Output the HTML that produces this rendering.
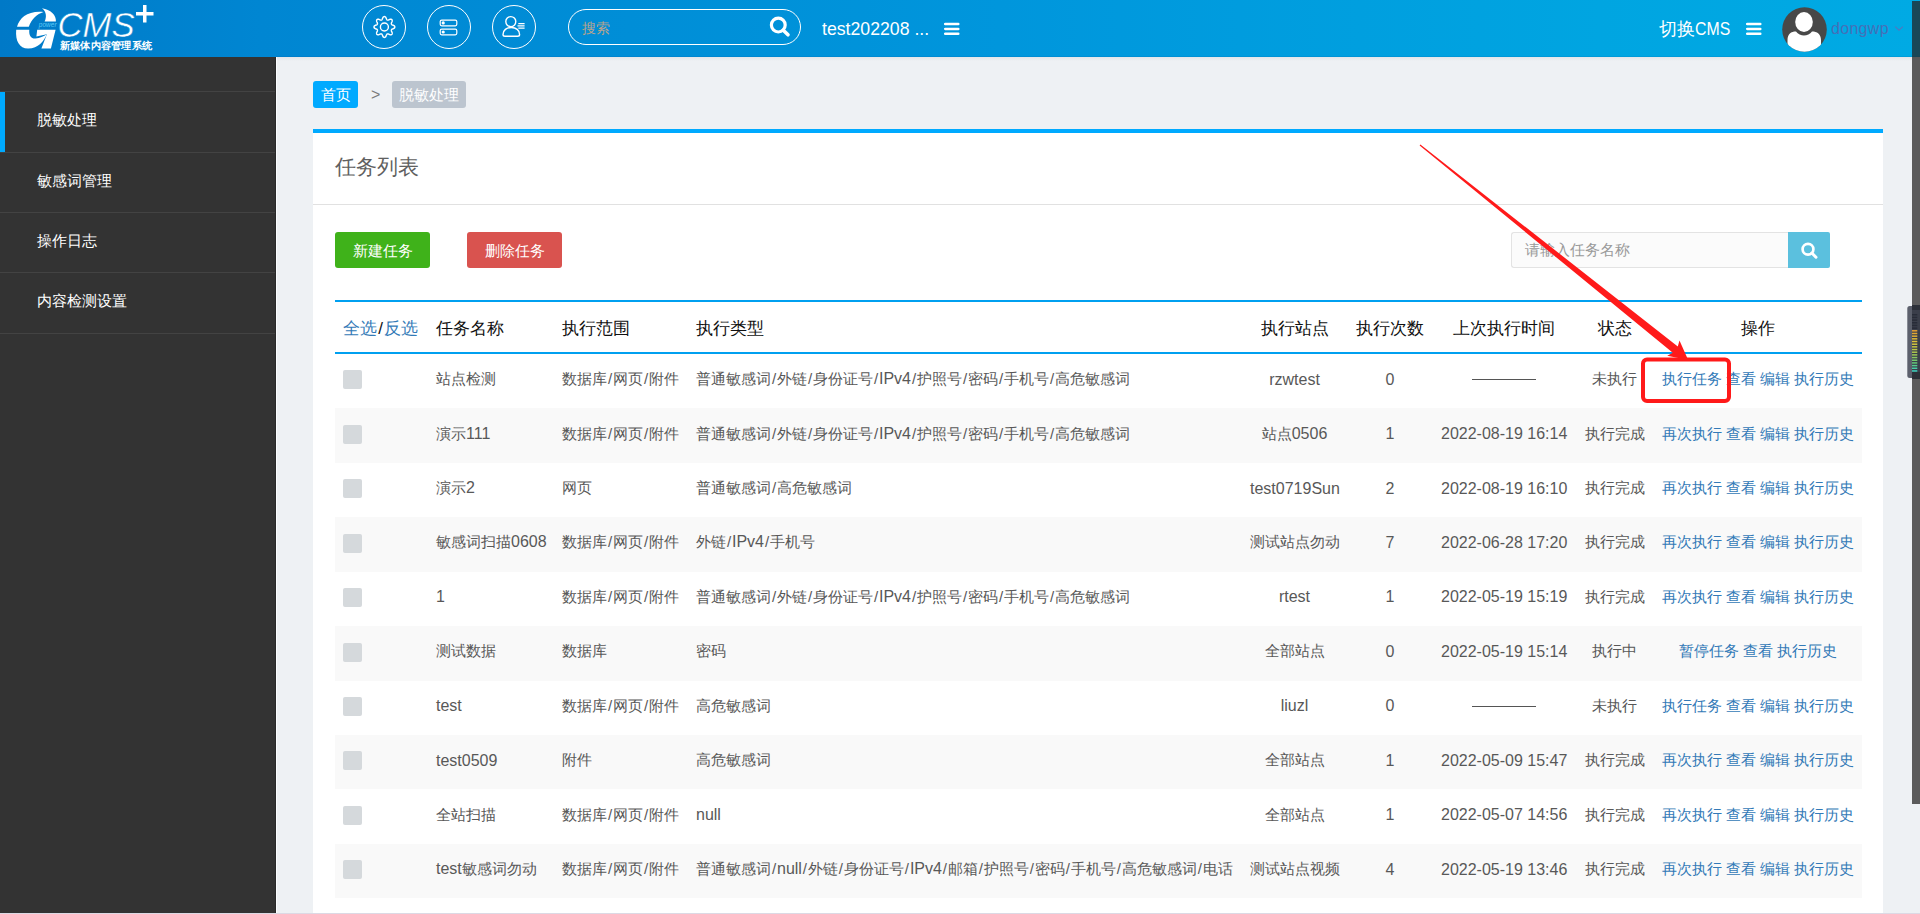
<!DOCTYPE html>
<html><head><meta charset="utf-8">
<style>
*{box-sizing:border-box;margin:0;padding:0}
html,body{width:1920px;height:914px;overflow:hidden;background:#eef1f4;font-family:"Liberation Sans",sans-serif;color:#555}
.abs{position:absolute}
#hdr{position:absolute;left:0;top:0;width:1920px;height:57px;background:linear-gradient(to right,rgb(0,121,199) 0px,rgb(0,134,210) 260px,rgb(0,150,220) 1000px,rgb(0,165,225) 1600px,rgb(0,170,228) 1920px)}
.circ{position:absolute;top:5px;width:44px;height:44px;border:1.5px solid #fff;border-radius:50%}
.circ svg{position:absolute;left:0;top:0}
#srch{position:absolute;left:568px;top:9px;width:233px;height:36px;border:1px solid #fff;border-radius:18px}
#srch span{position:absolute;left:13px;top:9px;font-size:14px;line-height:18px;color:#b8a48e}
.htxt{position:absolute;color:#fff;font-size:18px;line-height:22px;white-space:nowrap}
.ham{position:absolute;width:15px;height:12px}
.ham i{position:absolute;left:0;width:15px;height:2.5px;background:#fff}
#side{position:absolute;left:0;top:57px;width:276px;height:857px;background:#333}
.sep{position:absolute;left:0;width:276px;height:1px;background:#434343}
.mi{position:absolute;left:37px;font-size:15px;color:#fff;line-height:20px}
#bc1{position:absolute;left:313px;top:81px;width:45px;height:27px;background:#00aaff;border-radius:3px;color:#fff;font-size:15px;line-height:27px;padding-left:8px}
#bcgt{position:absolute;left:371px;top:86px;font-size:16px;line-height:18px;color:#7a7a7a}
#bc2{position:absolute;left:392px;top:81px;width:74px;height:27px;background:#bcc5cf;border-radius:3px;color:#fff;font-size:15px;line-height:27px;padding-left:7px}
#panel{position:absolute;left:313px;top:129px;width:1570px;height:800px;background:#fff;border-top:4px solid #00aaff}
#ptitle{position:absolute;left:22px;top:21px;font-size:21px;line-height:26px;color:#606060}
#psep{position:absolute;left:0;top:71px;width:1570px;height:1px;background:#e1e1e1}
.btn{position:absolute;top:99px;width:95px;height:36px;border-radius:3px;color:#fff;font-size:15px;line-height:38px;text-align:center}
#tsearch{position:absolute;left:1198px;top:99px;width:277px;height:36px;background:#fbfbfb;border:1px solid #e3e3e3;border-right:0;border-radius:3px 0 0 3px}
#tsearch span{position:absolute;left:13px;top:8px;font-size:15px;line-height:18px;color:#999}
#tsbtn{position:absolute;left:1475px;top:99px;width:42px;height:36px;background:#5bc0de;border-radius:0 2px 2px 0}
table{position:absolute;left:22px;top:167px;width:1527px;border-collapse:separate;border-spacing:0;table-layout:fixed}
th{height:54px;font-size:17px;font-weight:normal;color:#111;text-align:left;padding:2px 8px 0;border-top:2px solid #00a0f0;border-bottom:2px solid #00a0f0;white-space:nowrap}
td{height:54.43px;font-size:15px;color:#585858;padding:0 8px 3px;white-space:nowrap;border-top:0}
tr:nth-child(even) td{background:#f9f9f9}
th.c,td.c{text-align:center}
.cb{display:inline-block;width:19px;height:19px;background:#d5d9dc;border-radius:2px;vertical-align:middle}
.dash{display:inline-block;width:64px;height:1px;background:#555;vertical-align:middle;position:relative;top:-1.5px}
.ops a{color:#337ab7}
td.ops{padding-left:7px;padding-right:7px}
.l{font-size:16px}
.sl{display:inline-block;width:6px;text-align:center}
a.bl{color:#337ab7}
</style></head><body>
<div id="hdr">
  <!-- logo -->
  <svg class="abs" style="left:0;top:0" width="170" height="57" viewBox="0 0 170 57">
    <g fill="#fff">
    <path d="M17,26.8 C19.5,17.5 28,10.5 43.5,11.9 C37,14 31.5,19 28.8,26.8 Z"/>
    <path d="M41.9,8.2 C50.5,9.5 56.5,15 55.9,21.6 L44.6,21.6 C46.8,17 46.5,11.5 41.9,8.2 Z"/>
    <path d="M16.2,29.7 L29.3,29.7 C28.8,35.5 31,38.8 35.5,38.6 C40,38.3 43.5,36 46.9,34.2 C44,41 38,48.8 28,48.6 C19.5,48.4 15.2,41 16.2,29.7 Z"/>
    <path d="M37.2,29.7 L55.6,29.7 L50.9,48.6 L41.4,48.6 L46.9,34.2 L36.4,36.4 Z"/>
    </g>
    <text x="38.8" y="27.2" font-size="7" font-style="italic" fill="#5ccaf6" textLength="17.8" lengthAdjust="spacingAndGlyphs">power</text>
    <text x="57.5" y="37.3" font-family="Liberation Sans" font-style="italic" font-size="35.5" fill="#fff" stroke="#0083cc" stroke-width="0.5" textLength="77" lengthAdjust="spacingAndGlyphs">CMS</text>
    <path d="M143 5 h3.5 v7 h7 v3.5 h-7 v7 h-3.5 v-7 h-7 v-3.5 h7 z" fill="#fff"/>
    <text x="60" y="49" font-size="10" font-weight="bold" fill="#fff" textLength="92" lengthAdjust="spacingAndGlyphs">新媒体内容管理系统</text>
  </svg>
  <div class="circ" style="left:362px">
    <svg width="41" height="41" viewBox="0 0 41 41"><g transform="translate(21.4,21)" fill="none" stroke="#fff" stroke-width="1.4">
      <path d="M0.00 -10.45 L0.41 -10.39 L0.80 -10.21 L1.17 -9.90 L1.50 -9.48 L1.76 -8.83 L1.96 -8.17 L2.18 -7.73 L2.40 -7.38 L2.63 -7.13 L2.89 -6.98 L3.18 -6.91 L3.52 -6.92 L3.92 -7.00 L4.39 -7.16 L5.00 -7.48 L5.64 -7.77 L6.17 -7.83 L6.65 -7.78 L7.06 -7.63 L7.39 -7.39 L7.63 -7.06 L7.78 -6.65 L7.83 -6.17 L7.77 -5.64 L7.48 -5.00 L7.16 -4.39 L7.00 -3.92 L6.92 -3.52 L6.91 -3.18 L6.98 -2.89 L7.13 -2.63 L7.38 -2.40 L7.73 -2.18 L8.17 -1.96 L8.83 -1.76 L9.48 -1.50 L9.90 -1.17 L10.21 -0.80 L10.39 -0.41 L10.45 -0.00 L10.39 0.41 L10.21 0.80 L9.90 1.17 L9.48 1.50 L8.83 1.76 L8.17 1.96 L7.73 2.18 L7.38 2.40 L7.13 2.63 L6.98 2.89 L6.91 3.18 L6.92 3.52 L7.00 3.92 L7.16 4.39 L7.48 5.00 L7.77 5.64 L7.83 6.17 L7.78 6.65 L7.63 7.06 L7.39 7.39 L7.06 7.63 L6.65 7.78 L6.17 7.83 L5.64 7.77 L5.00 7.48 L4.39 7.16 L3.92 7.00 L3.52 6.92 L3.18 6.91 L2.89 6.98 L2.63 7.13 L2.40 7.38 L2.18 7.73 L1.96 8.17 L1.76 8.83 L1.50 9.48 L1.17 9.90 L0.80 10.21 L0.41 10.39 L0.00 10.45 L-0.41 10.39 L-0.80 10.21 L-1.17 9.90 L-1.50 9.48 L-1.76 8.83 L-1.96 8.17 L-2.18 7.73 L-2.40 7.38 L-2.63 7.13 L-2.89 6.98 L-3.18 6.91 L-3.52 6.92 L-3.92 7.00 L-4.39 7.16 L-5.00 7.48 L-5.64 7.77 L-6.17 7.83 L-6.65 7.78 L-7.06 7.63 L-7.39 7.39 L-7.63 7.06 L-7.78 6.65 L-7.83 6.17 L-7.77 5.64 L-7.48 5.00 L-7.16 4.39 L-7.00 3.92 L-6.92 3.52 L-6.91 3.18 L-6.98 2.89 L-7.13 2.63 L-7.38 2.40 L-7.73 2.18 L-8.17 1.96 L-8.83 1.76 L-9.48 1.50 L-9.90 1.17 L-10.21 0.80 L-10.39 0.41 L-10.45 0.00 L-10.39 -0.41 L-10.21 -0.80 L-9.90 -1.17 L-9.48 -1.50 L-8.83 -1.76 L-8.17 -1.96 L-7.73 -2.18 L-7.38 -2.40 L-7.13 -2.63 L-6.98 -2.89 L-6.91 -3.18 L-6.92 -3.52 L-7.00 -3.92 L-7.16 -4.39 L-7.48 -5.00 L-7.77 -5.64 L-7.83 -6.17 L-7.78 -6.65 L-7.63 -7.06 L-7.39 -7.39 L-7.06 -7.63 L-6.65 -7.78 L-6.17 -7.83 L-5.64 -7.77 L-5.00 -7.48 L-4.39 -7.16 L-3.92 -7.00 L-3.52 -6.92 L-3.18 -6.91 L-2.89 -6.98 L-2.63 -7.13 L-2.40 -7.38 L-2.18 -7.73 L-1.96 -8.17 L-1.76 -8.83 L-1.50 -9.48 L-1.17 -9.90 L-0.80 -10.21 L-0.41 -10.39 Z"/>
      <circle r="4"/></g></svg>
  </div>
  <div class="circ" style="left:427px">
    <svg width="41" height="41" viewBox="0 0 41 41"><g fill="none" stroke="#fff" stroke-width="1.2">
      <rect x="12.2" y="14.1" width="16.6" height="5.7" rx="1.5"/><rect x="12.2" y="23.2" width="16.6" height="5.6" rx="1.5"/></g>
      <circle cx="15.2" cy="16.9" r="1.6" fill="#fff"/><circle cx="15.2" cy="26" r="1.6" fill="#fff"/></svg>
  </div>
  <div class="circ" style="left:492px">
    <svg width="41" height="41" viewBox="0 0 41 41"><g fill="none" stroke="#fff" stroke-width="1.4">
      <circle cx="17.8" cy="15.6" r="5"/><path d="M12 30.2 H24.6 Q26.6 30.2 26.6 28.4 C26.6 24.3 23 21.5 18.3 21.5 C13.6 21.5 10 24.3 10 28.4 Q10 30.2 12 30.2 Z"/>
      <path d="M25.3 17.7 H31.6 M24.5 19.9 H31.6 M25.3 22.1 H31.6" stroke-width="1.2"/></g></svg>
  </div>
  <div id="srch"><span>搜索</span>
    <svg class="abs" style="left:199px;top:5px" width="24" height="24" viewBox="0 0 24 24"><circle cx="10.3" cy="10.1" r="6.9" fill="none" stroke="#fff" stroke-width="3.2"/><path d="M15.3 15.2 L20 19.8" stroke="#fff" stroke-width="3.6" stroke-linecap="round"/></svg>
  </div>
  <div class="htxt" style="left:822px;top:18px;font-size:17.7px">test202208 ...</div>
  <svg class="abs" style="left:944px;top:22px" width="16" height="14" viewBox="0 0 16 14"><path d="M1.2 2 H14.3 M1.2 6.9 H14.3 M1.2 11.7 H14.3" stroke="#fff" stroke-width="2.5" stroke-linecap="round"/></svg>
  <div class="htxt" style="left:1659px;top:18px">切换<span style="display:inline-block;transform:scaleX(0.88);transform-origin:0 0">CMS</span></div>
  <svg class="abs" style="left:1746px;top:22px" width="16" height="14" viewBox="0 0 16 14"><path d="M1.2 2 H14.3 M1.2 6.9 H14.3 M1.2 11.7 H14.3" stroke="#fff" stroke-width="2.5" stroke-linecap="round"/></svg>
  <svg class="abs" style="left:1782px;top:7px" width="45" height="45" viewBox="0 0 45 45">
    <defs><clipPath id="avc"><circle cx="22.5" cy="22.5" r="22.3"/></clipPath></defs>
    <circle cx="22.5" cy="22.5" r="22.3" fill="#484848"/>
    <g clip-path="url(#avc)" fill="#fff">
      <ellipse cx="22" cy="15" rx="8.8" ry="10"/>
      <path d="M5.5 50 L5.5 33 C5.5 27 9 24.5 14 24.5 C16 27 19 28.5 22 28.5 C25 28.5 28 27 30 24.5 C35 24.5 39 27 39 33 L39 50 Z"/>
    </g>
  </svg>
  <div class="abs" style="left:1831px;top:19px;font-size:16px;line-height:20px;color:#4470b8;letter-spacing:0.3px">dongwp</div>
  <svg class="abs" style="left:1894px;top:25px" width="10" height="7" viewBox="0 0 10 7"><path d="M1.2 1.6 L5 5.2 L8.8 1.6" fill="none" stroke="#4f78c0" stroke-width="1.1"/></svg>
</div>

<div id="side">
  <div class="sep" style="top:34px"></div>
  <div class="abs" style="left:0;top:35px;width:5px;height:60px;background:#00aaff"></div>
  <div class="sep" style="top:95px"></div>
  <div class="sep" style="top:155px"></div>
  <div class="sep" style="top:215px"></div>
  <div class="sep" style="top:276px"></div>
  <div class="mi" style="top:53px">脱敏处理</div>
  <div class="mi" style="top:114px">敏感词管理</div>
  <div class="mi" style="top:174px">操作日志</div>
  <div class="mi" style="top:234px">内容检测设置</div>
</div>

<div class="abs" style="left:276px;top:56px;width:1644px;height:1px;background:rgba(0,60,140,0.10)"></div>
<div class="abs" style="left:275px;top:57px;width:1px;height:856px;background:#292929"></div>
<div class="abs" style="left:276px;top:57px;width:1px;height:856px;background:#fbfdff"></div>
<div class="abs" style="left:277px;top:57px;width:1643px;height:4px;background:linear-gradient(#e4e6e9,#eef1f4)"></div>
<div id="bc1">首页</div>
<div id="bcgt">&gt;</div>
<div id="bc2">脱敏处理</div>

<div id="panel">
  <div id="ptitle">任务列表</div>
  <div id="psep"></div>
  <div class="btn" style="left:22px;background:#3fb21a">新建任务</div>
  <div class="btn" style="left:154px;background:#d9534f">删除任务</div>
  <div id="tsearch"><span>请输入任务名称</span></div>
  <div id="tsbtn"><svg class="abs" style="left:12px;top:9px" width="20" height="20" viewBox="0 0 20 20"><circle cx="8" cy="8.2" r="5.4" fill="none" stroke="#fff" stroke-width="2.7"/><path d="M11.8 12 L16 16.2" stroke="#fff" stroke-width="3" stroke-linecap="round"/></svg></div>
  <table>
    <colgroup><col style="width:93px"><col style="width:126px"><col style="width:134px"><col style="width:554px"><col style="width:105px"><col style="width:86px"><col style="width:142px"><col style="width:79px"><col style="width:208px"></colgroup>
    <thead><tr><th><a class="bl">全选</a><span class="sl" style="width:7px">/</span><a class="bl">反选</a></th><th>任务名称</th><th>执行范围</th><th>执行类型</th><th class="c">执行站点</th><th class="c">执行次数</th><th class="c">上次执行时间</th><th class="c">状态</th><th class="c">操作</th></tr></thead>
    <tbody>
<tr><td><span class="cb"></span></td><td>站点检测</td><td>数据库<span class="sl">/</span>网页<span class="sl">/</span>附件</td><td>普通敏感词<span class="sl">/</span>外链<span class="sl">/</span>身份证号<span class="sl">/</span><span class="l">IPv4</span><span class="sl">/</span>护照号<span class="sl">/</span>密码<span class="sl">/</span>手机号<span class="sl">/</span>高危敏感词</td><td class="c"><span class="l">rzwtest</span></td><td class="c"><span class="l">0</span></td><td class="c"><span class="dash"></span></td><td class="c">未执行</td><td class="c ops"><a>执行任务</a> <a>查看</a> <a>编辑</a> <a>执行历史</a></td></tr>
<tr><td><span class="cb"></span></td><td>演示<span class="l">111</span></td><td>数据库<span class="sl">/</span>网页<span class="sl">/</span>附件</td><td>普通敏感词<span class="sl">/</span>外链<span class="sl">/</span>身份证号<span class="sl">/</span><span class="l">IPv4</span><span class="sl">/</span>护照号<span class="sl">/</span>密码<span class="sl">/</span>手机号<span class="sl">/</span>高危敏感词</td><td class="c">站点<span class="l">0506</span></td><td class="c"><span class="l">1</span></td><td class="c"><span class="l">2022-08-19 16:14</span></td><td class="c">执行完成</td><td class="c ops"><a>再次执行</a> <a>查看</a> <a>编辑</a> <a>执行历史</a></td></tr>
<tr><td><span class="cb"></span></td><td>演示<span class="l">2</span></td><td>网页</td><td>普通敏感词<span class="sl">/</span>高危敏感词</td><td class="c"><span class="l">test0719Sun</span></td><td class="c"><span class="l">2</span></td><td class="c"><span class="l">2022-08-19 16:10</span></td><td class="c">执行完成</td><td class="c ops"><a>再次执行</a> <a>查看</a> <a>编辑</a> <a>执行历史</a></td></tr>
<tr><td><span class="cb"></span></td><td>敏感词扫描<span class="l">0608</span></td><td>数据库<span class="sl">/</span>网页<span class="sl">/</span>附件</td><td>外链<span class="sl">/</span><span class="l">IPv4</span><span class="sl">/</span>手机号</td><td class="c">测试站点勿动</td><td class="c"><span class="l">7</span></td><td class="c"><span class="l">2022-06-28 17:20</span></td><td class="c">执行完成</td><td class="c ops"><a>再次执行</a> <a>查看</a> <a>编辑</a> <a>执行历史</a></td></tr>
<tr><td><span class="cb"></span></td><td><span class="l">1</span></td><td>数据库<span class="sl">/</span>网页<span class="sl">/</span>附件</td><td>普通敏感词<span class="sl">/</span>外链<span class="sl">/</span>身份证号<span class="sl">/</span><span class="l">IPv4</span><span class="sl">/</span>护照号<span class="sl">/</span>密码<span class="sl">/</span>手机号<span class="sl">/</span>高危敏感词</td><td class="c"><span class="l">rtest</span></td><td class="c"><span class="l">1</span></td><td class="c"><span class="l">2022-05-19 15:19</span></td><td class="c">执行完成</td><td class="c ops"><a>再次执行</a> <a>查看</a> <a>编辑</a> <a>执行历史</a></td></tr>
<tr><td><span class="cb"></span></td><td>测试数据</td><td>数据库</td><td>密码</td><td class="c">全部站点</td><td class="c"><span class="l">0</span></td><td class="c"><span class="l">2022-05-19 15:14</span></td><td class="c">执行中</td><td class="c ops"><a>暂停任务</a> <a>查看</a> <a>执行历史</a></td></tr>
<tr><td><span class="cb"></span></td><td><span class="l">test</span></td><td>数据库<span class="sl">/</span>网页<span class="sl">/</span>附件</td><td>高危敏感词</td><td class="c"><span class="l">liuzl</span></td><td class="c"><span class="l">0</span></td><td class="c"><span class="dash"></span></td><td class="c">未执行</td><td class="c ops"><a>执行任务</a> <a>查看</a> <a>编辑</a> <a>执行历史</a></td></tr>
<tr><td><span class="cb"></span></td><td><span class="l">test0509</span></td><td>附件</td><td>高危敏感词</td><td class="c">全部站点</td><td class="c"><span class="l">1</span></td><td class="c"><span class="l">2022-05-09 15:47</span></td><td class="c">执行完成</td><td class="c ops"><a>再次执行</a> <a>查看</a> <a>编辑</a> <a>执行历史</a></td></tr>
<tr><td><span class="cb"></span></td><td>全站扫描</td><td>数据库<span class="sl">/</span>网页<span class="sl">/</span>附件</td><td><span class="l">null</span></td><td class="c">全部站点</td><td class="c"><span class="l">1</span></td><td class="c"><span class="l">2022-05-07 14:56</span></td><td class="c">执行完成</td><td class="c ops"><a>再次执行</a> <a>查看</a> <a>编辑</a> <a>执行历史</a></td></tr>
<tr><td><span class="cb"></span></td><td><span class="l">test</span>敏感词勿动</td><td>数据库<span class="sl">/</span>网页<span class="sl">/</span>附件</td><td>普通敏感词<span class="sl">/</span><span class="l">null</span><span class="sl">/</span>外链<span class="sl">/</span>身份证号<span class="sl">/</span><span class="l">IPv4</span><span class="sl">/</span>邮箱<span class="sl">/</span>护照号<span class="sl">/</span>密码<span class="sl">/</span>手机号<span class="sl">/</span>高危敏感词<span class="sl">/</span>电话</td><td class="c">测试站点视频</td><td class="c"><span class="l">4</span></td><td class="c"><span class="l">2022-05-19 13:46</span></td><td class="c">执行完成</td><td class="c ops"><a>再次执行</a> <a>查看</a> <a>编辑</a> <a>执行历史</a></td></tr>
    </tbody>
  </table>
</div>

<div class="abs" style="left:0;top:913px;width:1920px;height:1px;background:#dcd9e4"></div>
<!-- right dark strip -->
<div class="abs" style="left:1912px;top:1px;width:8px;height:803px;background:rgba(34,33,32,0.72)"></div>
<svg class="abs" style="left:1907px;top:305px" width="13" height="74" viewBox="0 0 13 74"><rect x="0.3" y="1" width="12.7" height="72" rx="2.5" fill="#5c606c"/><rect x="5" y="0" width="8" height="74" fill="#3a3e4a"/><rect x="5" y="0" width="8" height="5" fill="#2c3038"/><rect x="5" y="67" width="8" height="7" fill="#2c3038"/><rect x="5" y="9.00" width="5.3" height="1.5" fill="rgb(40,44,56)"/><rect x="5" y="11.68" width="5.3" height="1.5" fill="rgb(40,44,56)"/><rect x="5" y="14.35" width="5.3" height="1.5" fill="rgb(40,44,56)"/><rect x="5" y="17.03" width="5.3" height="1.5" fill="rgb(40,44,56)"/><rect x="5" y="19.70" width="5.3" height="1.5" fill="rgb(40,44,56)"/><rect x="5" y="22.38" width="5.3" height="1.5" fill="rgb(40,44,56)"/><rect x="5" y="25.06" width="5.3" height="1.5" fill="rgb(230,160,50)"/><rect x="5" y="27.73" width="5.3" height="1.5" fill="rgb(227,168,52)"/><rect x="5" y="30.41" width="5.3" height="1.5" fill="rgb(225,177,54)"/><rect x="5" y="33.09" width="5.3" height="1.5" fill="rgb(223,186,56)"/><rect x="5" y="35.76" width="5.3" height="1.5" fill="rgb(221,195,58)"/><rect x="5" y="38.44" width="5.3" height="1.5" fill="rgb(213,200,62)"/><rect x="5" y="41.11" width="5.3" height="1.5" fill="rgb(200,200,68)"/><rect x="5" y="43.79" width="5.3" height="1.5" fill="rgb(186,200,73)"/><rect x="5" y="46.47" width="5.3" height="1.5" fill="rgb(173,200,78)"/><rect x="5" y="49.14" width="5.3" height="1.5" fill="rgb(156,200,87)"/><rect x="5" y="51.82" width="5.3" height="1.5" fill="rgb(137,200,98)"/><rect x="5" y="54.50" width="5.3" height="1.5" fill="rgb(118,200,109)"/><rect x="5" y="57.17" width="5.3" height="1.5" fill="rgb(100,200,120)"/><rect x="5" y="59.85" width="5.3" height="1.5" fill="rgb(86,203,143)"/><rect x="5" y="62.52" width="5.3" height="1.5" fill="rgb(73,206,166)"/><rect x="5" y="65.20" width="5.3" height="1.5" fill="rgb(60,210,190)"/></svg>

<!-- annotation -->
<svg class="abs" style="left:0;top:0" width="1920" height="914" viewBox="0 0 1920 914">
  <path d="M1419.62 145.47 L1672.80 352.72 L1667.22 355.68 L1688.18 359.92 L1679.48 340.39 L1677.80 346.48 L1420.38 144.53 Z" fill="#ff1a1a"/>
  <rect x="1643" y="359.5" width="86" height="41.5" rx="4" fill="none" stroke="#ff1a1a" stroke-width="4"/>
</svg>
</body></html>
